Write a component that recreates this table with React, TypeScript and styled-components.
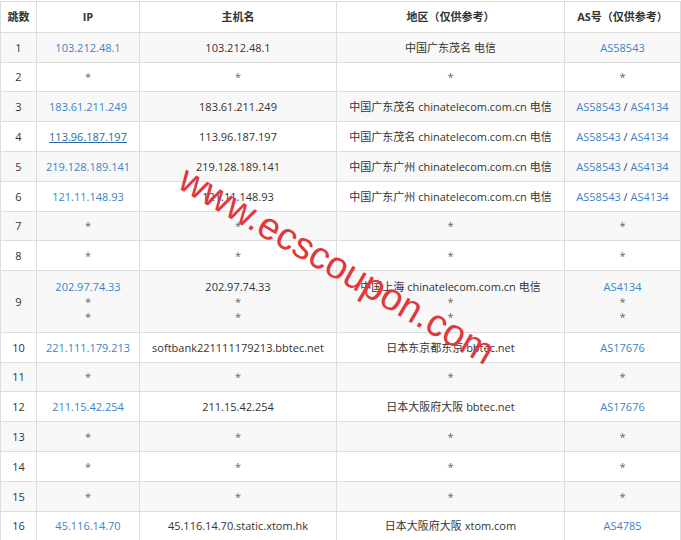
import styled, { createGlobalStyle } from "styled-components"

const GlobalStyle = createGlobalStyle`
  body {
    margin: 0;
    background: #fff;
    font-family: "Open Sans", "Noto Sans CJK SC", sans-serif;
    font-size: 11px;
    color: #333;
  }
`

const Page = styled.div`
  position: relative;
  width: 681px;
  height: 540px;
  overflow: hidden;
  padding-top: 1px;
  box-sizing: border-box;
`

const Table = styled.table`
  width: 680px;
  table-layout: fixed;
  border-collapse: collapse;
  border: 1px solid #ddd;
`

const HeadCell = styled.th`
  height: 29.8px;
  padding: 0 4px;
  border: 1px solid #ddd;
  font-weight: bold;
  color: #333;
  line-height: 15px;
  text-align: center;
  vertical-align: middle;
  white-space: nowrap;
`

const Row = styled.tr<{ $tall?: boolean }>`
  height: ${(p) => (p.$tall ? "61.6px" : "29.8px")};
  &:nth-child(odd) {
    background: #f8f8f8;
  }
`

const Cell = styled.td`
  padding: 0 4px;
  border: 1px solid #ddd;
  line-height: 15px;
  text-align: center;
  vertical-align: middle;
  white-space: nowrap;
  overflow: hidden;
`

const Line = styled.div``

const Star = styled.span`
  color: #666;
`

const Link = styled.a<{ $hover?: boolean }>`
  color: ${(p) => (p.$hover ? "#2a6aa6" : "#3a84c8")};
  text-decoration: ${(p) => (p.$hover ? "underline" : "none")};
`

const Slash = styled.span`
  color: #444;
`

const Watermark = styled.div`
  position: absolute;
  left: 176px;
  top: 155px;
  font-family: "Liberation Sans", Arial, sans-serif;
  font-size: 38px;
  line-height: 38px;
  color: #e0383c;
  white-space: nowrap;
  transform-origin: 0 32px;
  transform: rotate(30deg);
  pointer-events: none;
`

type Hop = {
  n: number
  ip: string[]
  host: string[]
  area: string[]
  as: string[]
  hover?: boolean
}

const telecom = (city: string) => `中国广东${city} chinatelecom.com.cn 电信`
const star: Hop = { n: 0, ip: ["*"], host: ["*"], area: ["*"], as: ["*"] }

const hops: Hop[] = [
  { n: 1, ip: ["103.212.48.1"], host: ["103.212.48.1"], area: ["中国广东茂名 电信"], as: ["AS58543"] },
  { ...star, n: 2 },
  { n: 3, ip: ["183.61.211.249"], host: ["183.61.211.249"], area: [telecom("茂名")], as: ["AS58543 / AS4134"] },
  { n: 4, ip: ["113.96.187.197"], host: ["113.96.187.197"], area: [telecom("茂名")], as: ["AS58543 / AS4134"], hover: true },
  { n: 5, ip: ["219.128.189.141"], host: ["219.128.189.141"], area: [telecom("广州")], as: ["AS58543 / AS4134"] },
  { n: 6, ip: ["121.11.148.93"], host: ["121.11.148.93"], area: [telecom("广州")], as: ["AS58543 / AS4134"] },
  { ...star, n: 7 },
  { ...star, n: 8 },
  {
    n: 9,
    ip: ["202.97.74.33", "*", "*"],
    host: ["202.97.74.33", "*", "*"],
    area: ["中国上海 chinatelecom.com.cn 电信", "*", "*"],
    as: ["AS4134", "*", "*"],
  },
  { n: 10, ip: ["221.111.179.213"], host: ["softbank221111179213.bbtec.net"], area: ["日本东京都东京 bbtec.net"], as: ["AS17676"] },
  { ...star, n: 11 },
  { n: 12, ip: ["211.15.42.254"], host: ["211.15.42.254"], area: ["日本大阪府大阪 bbtec.net"], as: ["AS17676"] },
  { ...star, n: 13 },
  { ...star, n: 14 },
  { ...star, n: 15 },
  { n: 16, ip: ["45.116.14.70"], host: ["45.116.14.70.static.xtom.hk"], area: ["日本大阪府大阪 xtom.com"], as: ["AS4785"] },
]

function renderText(lines: string[]) {
  return lines.map((l, i) => <Line key={i}>{l === "*" ? <Star>*</Star> : l}</Line>)
}

function renderIp(lines: string[], hover?: boolean) {
  return lines.map((l, i) => (
    <Line key={i}>{l === "*" ? <Star>*</Star> : <Link href="#" $hover={hover}>{l}</Link>}</Line>
  ))
}

function renderAs(lines: string[]) {
  return lines.map((l, i) => {
    if (l === "*") return <Line key={i}><Star>*</Star></Line>
    const parts = l.split(" / ")
    return (
      <Line key={i}>
        {parts.map((p, j) => (
          <span key={p}>
            {j > 0 && <Slash> / </Slash>}
            <Link href="#">{p}</Link>
          </span>
        ))}
      </Line>
    )
  })
}

export default function App() {
  return (
    <Page>
      <GlobalStyle />
      <Table>
        <colgroup>
          <col style={{ width: 36 }} />
          <col style={{ width: 103 }} />
          <col style={{ width: 197 }} />
          <col style={{ width: 228 }} />
          <col style={{ width: 116 }} />
        </colgroup>
        <thead>
          <tr>
            <HeadCell>跳数</HeadCell>
            <HeadCell>IP</HeadCell>
            <HeadCell>主机名</HeadCell>
            <HeadCell>地区（仅供参考）</HeadCell>
            <HeadCell>AS号（仅供参考）</HeadCell>
          </tr>
        </thead>
        <tbody>
          {hops.map((h) => (
            <Row key={h.n} $tall={h.ip.length > 1}>
              <Cell>{h.n}</Cell>
              <Cell>{renderIp(h.ip, h.hover)}</Cell>
              <Cell>{renderText(h.host)}</Cell>
              <Cell>{renderText(h.area)}</Cell>
              <Cell>{renderAs(h.as)}</Cell>
            </Row>
          ))}
        </tbody>
      </Table>
      <Watermark>www.ecscoupon.com</Watermark>
    </Page>
  )
}
